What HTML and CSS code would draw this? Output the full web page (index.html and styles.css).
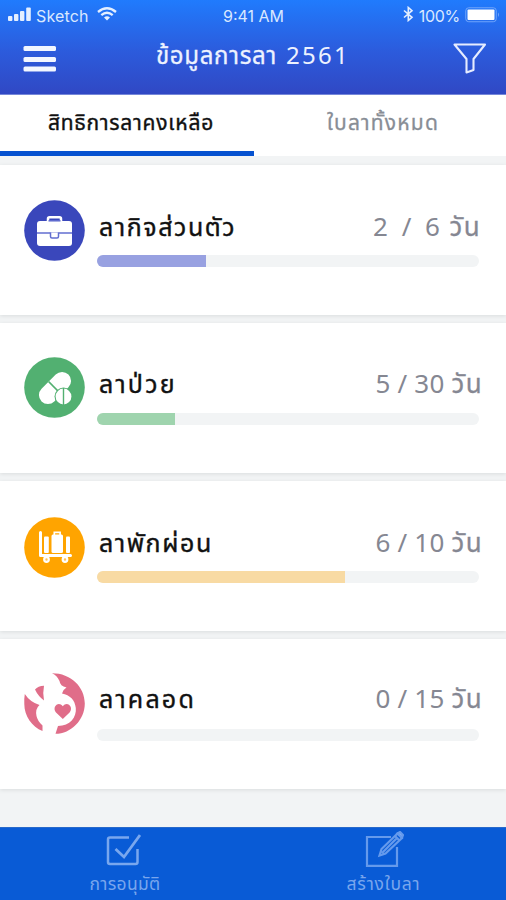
FILE: index.html
```
<!DOCTYPE html>
<html lang="th">
<head>
<meta charset="utf-8">
<title>ข้อมูลการลา 2561</title>
<link rel="stylesheet" href="styles.css">
</head>
<body>
<div class="app">
  <header class="header">
    <div class="status">
      <div class="status-left">
        <svg class="signal" width="24" height="15" viewBox="0 0 24 15" fill="#e4efff"><rect x="0" y="9" width="4.400" height="5" rx="1"/><rect x="6" y="7" width="4.400" height="7" rx="1"/><rect x="12" y="4" width="4.400" height="10" rx="1"/><rect x="18.200" y="0.500" width="4.600" height="13.500" rx="1"/></svg>
        <span class="carrier">Sketch</span>
        <svg class="wifi" width="20" height="14" viewBox="0 0 20 14" fill="none" stroke="#e4efff" stroke-width="2.300"><path d="M1 5Q10-2.500 19 5M4.300 8.200Q10 3.300 15.700 8.200"/><path d="M7 10.500Q10 8 13 10.500L10 13.500Z" fill="#e4efff" stroke="none"/></svg>
      </div>
      <span class="time">9:41 AM</span>
      <div class="status-right">
        <svg class="bluetooth" width="11" height="16" viewBox="0 0 11 16" fill="none" stroke="#e4efff" stroke-width="1.600"><path d="M1 4.500L9 11.300L5.300 14.500V1.500L9 4.700L1 11.500"/></svg>
        <span class="percent">100%</span>
        <svg class="battery" width="36" height="16" viewBox="0 0 36 16"><rect x=".75" y=".75" width="30.500" height="14" rx="3" fill="none" stroke="#6fa5fb"/><rect x="2.500" y="2.500" width="27" height="10.500" rx="1" fill="#fff"/><path d="M33 5.500q2 2.200 0 4.500z" fill="#6fa5fb"/></svg>
      </div>
    </div>
    <div class="titlebar">
      <svg width="34" height="28" viewBox="0 0 34 28" fill="#f2f6ff"><rect x="0.500" y="1" width="32.500" height="5" rx="1.500"/><rect x="0.500" y="12" width="32.500" height="5" rx="1.500"/><rect x="0.500" y="21.500" width="32.500" height="5" rx="1.500"/></svg>
      <h1 class="title"><span class="title-word">ข้อมูลการลา</span><span class="title-year">2561</span></h1>
      <svg width="34" height="32" viewBox="0 0 34 32" fill="none" stroke="#e6ecff" stroke-width="2.100" stroke-linejoin="round"><path d="M1.500 1.500H32L20.500 16V27L13.500 29.500V16Z"/></svg>
    </div>
  </header>
  <nav class="tabs">
    <div class="tab active"><span class="tab-one">สิทธิการลาคงเหลือ</span></div>
    <div class="tab"><span class="tab-two">ใบลาทั้งหมด</span></div>
  </nav>
  <main class="list">
    <section class="card personal">
      <svg class="icon" viewBox="0 0 61 61"><circle cx="30.500" cy="30.500" r="30.300" fill="#3a47bb"/><path d="M24 22V18.800q0-1.500 1.500-1.500h10q1.500 0 1.500 1.500V22" fill="none" stroke="#fff" stroke-width="2.500"/><rect x="13" y="21" width="35" height="25" rx="3" fill="#fff"/><path d="M24.500 20.800h12" stroke="#626ed0" stroke-width="1.500"/><path d="M13 33H48" stroke="#626ed0" stroke-width="1.600"/><path d="M26.500 32.500v4q0 1.500 1.500 1.500h5q1.500 0 1.500-1.500v-4" fill="#fff" stroke="#626ed0" stroke-width="1.500"/></svg>
      <div class="detail"><div class="row"><span class="name">ลากิจส่วนตัว</span><span class="days"><span class="num">2 / 6</span><span class="unit">วัน</span></span></div><div class="track"><div class="fill"></div></div></div>
    </section>
    <section class="card sick">
      <svg class="icon" viewBox="0 0 61 61"><circle cx="30.500" cy="30.500" r="30.300" fill="#52b071"/><g transform="rotate(-45 31 31)"><rect x="12" y="22" width="38" height="18" rx="9" fill="#fff"/><path d="M31 22v18" stroke="#52b071" stroke-width="1.500"/></g><circle cx="39.500" cy="39.500" r="9" fill="#52b071"/><circle cx="39.500" cy="39.500" r="7.900" fill="#fff"/><path d="M39.500 31v17" stroke="#52b071" stroke-width="1.400"/></svg>
      <div class="detail"><div class="row"><span class="name">ลาป่วย</span><span class="days"><span class="num">5 / 30</span><span class="unit">วัน</span></span></div><div class="track"><div class="fill"></div></div></div>
    </section>
    <section class="card vacation">
      <svg class="icon" viewBox="0 0 61 61"><circle cx="30.500" cy="30.500" r="30.300" fill="#ffa400"/><path d="M16.500 15.500V38.500H46.500" fill="none" stroke="#fff" stroke-width="3" stroke-linecap="round" stroke-linejoin="round"/><rect x="20" y="19.500" width="4.800" height="16.500" rx="1" fill="#fff"/><rect x="27.500" y="17.500" width="11.500" height="18.500" rx="1.500" fill="#fff"/><path d="M30.300 18v-2.700h5.800V18" fill="none" stroke="#fff" stroke-width="1.700"/><rect x="42" y="19.500" width="4" height="16.500" rx="1" fill="#fff"/><g fill="#ffc35a" stroke="#fff" stroke-width="2.200"><circle cx="22.500" cy="42.500" r="2.300"/><circle cx="41" cy="42.500" r="2.300"/></g></svg>
      <div class="detail"><div class="row"><span class="name">ลาพักผ่อน</span><span class="days"><span class="num">6 / 10</span><span class="unit">วัน</span></span></div><div class="track"><div class="fill"></div></div></div>
    </section>
    <section class="card maternity">
      <svg class="icon" viewBox="0 0 61 61" fill="#e06d89"><path d="M28 .3C47 .3 60.800 14 60.800 30.500S47 60.800 31.500 60.800L34 53C46 53 52.800 44 51.800 35C51 27 46 22 38 20.500Q39 16.500 42.500 14.500Q36 13 35.500 8Q33 2.500 28 .3Z"/><path d="M.8 21Q6 29 15.500 32Q11 36 12.500 43Q13.500 48 18.500 52.500V58C8 54 .3 43 .3 31Q0 26 .8 21Z"/><path d="M11 16.500Q14 13 20 12.800Q18.500 20 20 27.500Q14 23 11 16.500Z"/><path d="M38.800 46L32 39.500C27.500 34 34.500 27.500 38.800 33.200C43.100 27.500 50.100 34 45.600 39.500Z"/></svg>
      <div class="detail"><div class="row"><span class="name">ลาคลอด</span><span class="days"><span class="num">0 / 15</span><span class="unit">วัน</span></span></div><div class="track"><div class="fill"></div></div></div>
    </section>
  </main>
  <footer class="footer">
    <div class="action">
      <svg class="check" width="36" height="34" viewBox="0 0 36 34" fill="none" stroke="#79a7ee" stroke-width="2.500"><path d="M24 4.500H5q-2 0-2 2v22.500q0 2 2 2h25.500q2 0 2-2V16"/><path d="M10.500 16L19 24L35 2" stroke-width="2.800"/></svg>
      <span class="approve">การอนุมัติ</span>
    </div>
    <div class="action">
      <svg width="40" height="36" viewBox="0 0 40 36" fill="none" stroke="#659aec" stroke-width="2.200"><path d="M27 6H3V34.800H33V16"/><path d="M15.500 24.500L17.500 18L33.500 2.500L38 7L21.500 22.500ZM31 5l4.500 4.500M18 22L33 7"/><path d="M33.500 2.500L36 1L39 4L38 6.500Z" fill="#8db4f3"/></svg>
      <span class="create">สร้างใบลา</span>
    </div>
  </footer>
</div>
</body>
</html>
```
FILE: styles.css
```
* { box-sizing: border-box; }
body { margin: 0; font-family: "Noto Sans", "Noto Sans Thai", sans-serif; }
svg { display: block; flex: none; }
.app { width: 506px; height: 900px; display: flex; flex-direction: column; background: #f2f4f5; overflow: hidden; }
.header { height: 95px; background: linear-gradient(#207bfd, #2c5bdc 55%, #3048c4); border-bottom: 1px solid #7587d9; }
.status { height: 32px; display: grid; grid-template-columns: 1fr auto 1fr; align-items: center; padding: 0 5px 0 8px; color: #d9e8ff; font-family: Inter, sans-serif; font-size: 16px; }
.status-left, .status-right { display: flex; align-items: center; }
.status-right { justify-content: flex-end; gap: 5px; }
.carrier { margin: 0 8px 0 4px; letter-spacing: .15px; }
.percent { letter-spacing: -.3px; }
.time { margin-right: 2px; }
.signal, .bluetooth, .battery { margin-bottom: 4px; }
.wifi { margin-bottom: 5px; }
.battery { margin-bottom: 2px; }
.titlebar { height: 54px; display: flex; align-items: center; justify-content: space-between; padding: 0 19px 0 23px; }
.title { margin: -9px 6px 0 0; display: flex; gap: 9px; align-items: baseline; color: #edf2ff; font-size: 24px; font-weight: 400; line-height: 40px; white-space: nowrap; }
.title-word { letter-spacing: .7px; -webkit-text-stroke: .3px; }
.title-year { letter-spacing: 2.300px; margin-right: -2px; }
.tabs { height: 61px; display: grid; grid-template-columns: 254px 1fr; background: #fff; }
.tab { padding: 7px 0 0 6px; text-align: center; font-size: 21px; line-height: 40px; color: #888d95; letter-spacing: .8px; }
.tab-two { letter-spacing: 1.200px; -webkit-text-stroke: .3px; }
.active { padding-left: 8px; border-bottom: 5px solid #0652d0; color: #111; }
.active span { -webkit-text-stroke: .4px; }
.list { display: flex; flex-direction: column; gap: 8px; padding-top: 9px; flex: 1; }
.card { height: 150px; display: flex; gap: 12px; padding: 0 27px 0 24px; background: #fff; box-shadow: 0 1px 4px #d9dcdd; }
.icon { width: 61px; height: 61px; margin-top: 35px; }
.vacation .icon { margin-top: 36px; }
.sick .icon, .maternity .icon { margin-top: 34px; }
.detail { flex: 1; padding-top: 42px; }
.row { height: 48px; display: flex; justify-content: space-between; align-items: baseline; padding-left: 2px; line-height: 38px; white-space: nowrap; }
.sick .row { line-height: 36px; }
.maternity .row { line-height: 34px; }
.name { color: #111; font-size: 25px; letter-spacing: 1.600px; -webkit-text-stroke: .4px; }
.sick .name, .maternity .name { letter-spacing: 2.200px; }
.days { display: flex; gap: 7px; margin-right: -4px; color: #858792; font-size: 26px; }
.num { letter-spacing: .2px; }
.unit { letter-spacing: 1.400px; -webkit-text-stroke: .3px; }
.personal .days { margin-right: -2px; gap: 9px; }
.personal .num { word-spacing: 6px; letter-spacing: .5px; }
.track { height: 12px; border-radius: 6px; overflow: hidden; background: #f2f4f5; }
.fill { height: 100%; }
.personal .fill { width: 109px; background: #98a1e1; }
.sick .fill { width: 78px; background: #9fd4ae; }
.vacation .fill { width: 248px; background: #f8daa3; }
.maternity .fill { width: 0; }
.footer { height: 73px; flex: none; display: grid; grid-template-columns: 248px 1fr; background: #095bd6; border-top: 1px solid #2869ca; }
.action { display: flex; flex-direction: column; align-items: center; padding: 5px 0 0 2px; color: #79a6ed; font-size: 17.5px; line-height: 32px; letter-spacing: .3px; }
.check { margin-right: 4px; }
.action + .action { padding: 3px 0 0 13px; letter-spacing: .8px; }
```
